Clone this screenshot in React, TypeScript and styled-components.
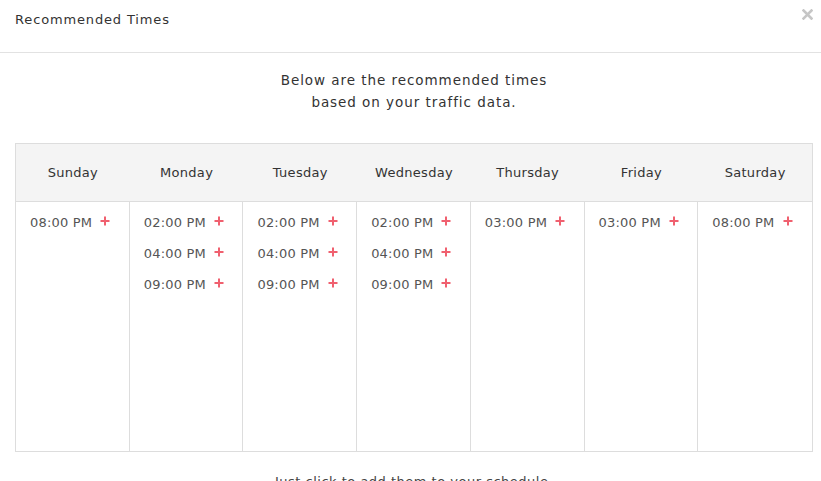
import styled, { createGlobalStyle } from 'styled-components';

const Global = createGlobalStyle`
  body {
    margin: 0;
    background: #fff;
    font-family: "DejaVu Sans", "Open Sans", sans-serif;
    color: #444;
  }
`;

const Modal = styled.div`
  width: 821px;
  height: 481px;
  overflow: hidden;
  background: #fff;
`;

const Header = styled.div`
  height: 52px;
  border-bottom: 1px solid #e2e2e2;
  display: flex;
  align-items: flex-start;
  justify-content: space-between;
  padding: 0 8px 0 15px;
`;

const Title = styled.h4`
  margin: 11px 0 0;
  font-size: 13px;
  line-height: 18px;
  font-weight: 400;
  color: #333;
  letter-spacing: 0.85px;
`;

const Close = styled.svg`
  margin-top: 9px;
  width: 11px;
  height: 11px;
`;

const Body = styled.div`
  padding: 16px 8px 0 15px;
`;

const Intro = styled.p`
  margin: 0 0 30px;
  text-align: center;
  font-size: 13.5px;
  line-height: 22px;
  color: #333;
  letter-spacing: 0.95px;
`;

const Grid = styled.div`
  display: grid;
  grid-template-columns: repeat(7, 1fr);
  border: 1px solid #ddd;
  width: 798px;
  box-sizing: border-box;
`;

const DayHead = styled.div`
  background: #f4f4f4;
  height: 57px;
  display: flex;
  align-items: center;
  justify-content: center;
  font-size: 13px;
  color: #333;
  letter-spacing: 0.3px;
  border-bottom: 1px solid #ddd;
  box-sizing: content-box;
`;

const DayCol = styled.div<{ $last?: boolean }>`
  height: 249px;
  box-sizing: border-box;
  border-right: ${(p) => (p.$last ? 'none' : '1px solid #ddd')};
  padding: 11px 0 0 14px;
  display: flex;
  flex-direction: column;
  gap: 11px;
`;

const Slot = styled.div`
  font-size: 13px;
  line-height: 20px;
  color: #555;
  letter-spacing: 0.2px;
  display: flex;
  align-items: center;
  gap: 8px;
`;

const Plus = styled.svg`
  width: 10px;
  height: 10px;
  margin-top: -5px;
`;

const Footer = styled.p`
  margin: 21px 0 0;
  text-align: center;
  font-size: 13px;
  line-height: 18px;
  color: #444;
  letter-spacing: 0.5px;
`;

const days: { name: string; times: string[] }[] = [
  { name: 'Sunday', times: ['08:00 PM'] },
  { name: 'Monday', times: ['02:00 PM', '04:00 PM', '09:00 PM'] },
  { name: 'Tuesday', times: ['02:00 PM', '04:00 PM', '09:00 PM'] },
  { name: 'Wednesday', times: ['02:00 PM', '04:00 PM', '09:00 PM'] },
  { name: 'Thursday', times: ['03:00 PM'] },
  { name: 'Friday', times: ['03:00 PM'] },
  { name: 'Saturday', times: ['08:00 PM'] },
];

export default function App() {
  return (
    <>
      <Global />
      <Modal>
        <Header>
          <Title>Recommended Times</Title>
          <Close viewBox="0 0 11 11">
            <path d="M1.5 1.5 L9.5 9.5 M9.5 1.5 L1.5 9.5" stroke="#c6c6c6" strokeWidth="2.6" strokeLinecap="square" />
          </Close>
        </Header>
        <Body>
          <Intro>
            Below are the recommended times
            <br />
            based on your traffic data.
          </Intro>
          <Grid>
            {days.map((d) => (
              <DayHead key={d.name}>{d.name}</DayHead>
            ))}
            {days.map((d, i) => (
              <DayCol key={d.name} $last={i === days.length - 1}>
                {d.times.map((t) => (
                  <Slot key={t}>
                    {t}
                    <Plus viewBox="0 0 10 10">
                      <path d="M5 0.5 V9.5 M0.5 5 H9.5" stroke="#f0606f" strokeWidth="2" />
                    </Plus>
                  </Slot>
                ))}
              </DayCol>
            ))}
          </Grid>
          <Footer>Just click to add them to your schedule.</Footer>
        </Body>
      </Modal>
    </>
  );
}
